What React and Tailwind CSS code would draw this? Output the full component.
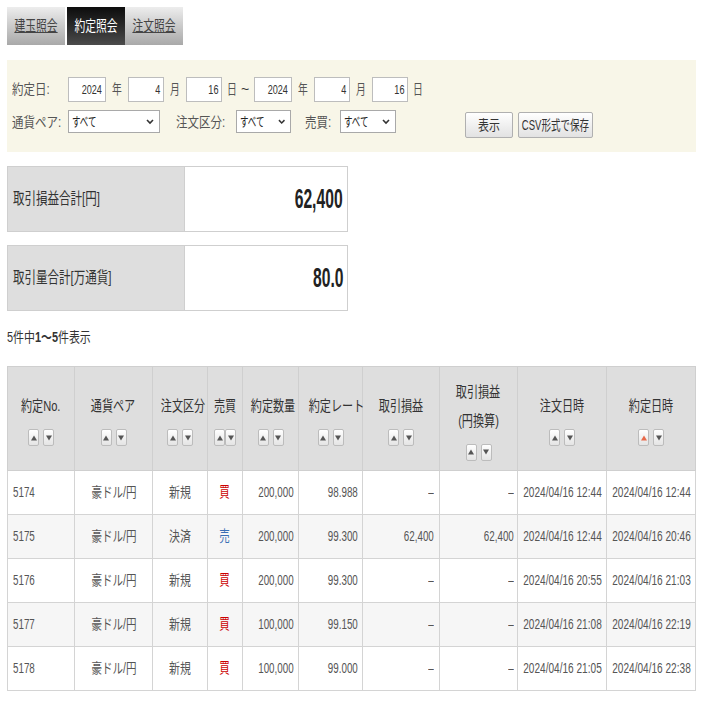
import React from "react";

const rows = [
  { no: "5174", kind: "新規", side: "買", qty: "200,000", rate: "98.988", pl: "–", plJpy: "–", ordered: "2024/04/16 12:44", executed: "2024/04/16 12:44" },
  { no: "5175", kind: "決済", side: "売", qty: "200,000", rate: "99.300", pl: "62,400", plJpy: "62,400", ordered: "2024/04/16 12:44", executed: "2024/04/16 20:46" },
  { no: "5176", kind: "新規", side: "買", qty: "200,000", rate: "99.300", pl: "–", plJpy: "–", ordered: "2024/04/16 20:55", executed: "2024/04/16 21:03" },
  { no: "5177", kind: "新規", side: "買", qty: "100,000", rate: "99.150", pl: "–", plJpy: "–", ordered: "2024/04/16 21:08", executed: "2024/04/16 22:19" },
  { no: "5178", kind: "新規", side: "買", qty: "100,000", rate: "99.000", pl: "–", plJpy: "–", ordered: "2024/04/16 21:05", executed: "2024/04/16 22:38" },
];

const columns = [
  { label: "約定No.", w: "w-[67px]" },
  { label: "通貨ペア", w: "w-[78px]" },
  { label: "注文区分", w: "w-[55px]" },
  { label: "売買", w: "w-[35px]", tight: true },
  { label: "約定数量", w: "w-[56px]" },
  { label: "約定レート", w: "w-[64px]" },
  { label: "取引損益", w: "w-[77px]" },
  { label: ["取引損益", "(円換算)"], w: "w-[78px]" },
  { label: "注文日時", w: "w-[89px]" },
  { label: "約定日時", w: "w-[89px]", active: true },
];

// the page's font is very narrow; squeeze text horizontally
function Sq({ c = "scale-x-[0.7] origin-center", children }) {
  return <span className={`inline-block whitespace-nowrap ${c}`}>{children}</span>;
}

function SortButton({ up, active }) {
  return (
    <span className="flex h-[17px] w-[11px] items-center justify-center rounded-[2px] border border-[#bcbcbc] bg-linear-to-b from-white to-[#e4e4e4]">
      <svg width="6" height="6" viewBox="0 0 6 6">
        <path d={up ? "M3 0.5L6 5.5H0z" : "M0 0.5h6L3 5.5z"} fill={active ? "#e8694a" : "#555"} />
      </svg>
    </span>
  );
}

function SortButtons({ active, tight }) {
  return (
    <div className={`mt-[9px] flex justify-center ${tight ? "gap-0" : "gap-[4px]"}`}>
      <SortButton up active={active} />
      <SortButton />
    </div>
  );
}

function DateInput({ value, w }) {
  return (
    <span className={`flex h-[25px] ${w} items-center justify-end border border-[#bdbdbd] bg-white pr-[3px] text-[13px] text-[#333]`}>
      <Sq c="scale-x-[0.7] origin-right">{value}</Sq>
    </span>
  );
}

function Select({ w }) {
  return (
    <span className={`flex h-[23px] ${w} items-center justify-between border border-[#a9a9a9] bg-white pl-[3px] pr-[5px] text-[13px] text-[#222]`}>
      <Sq c="scale-x-[0.65] origin-left">すべて</Sq>
      <svg width="8" height="6" viewBox="0 0 8 6">
        <path d="M1 1l3 3 3-3" stroke="#333" strokeWidth="1.6" fill="none" />
      </svg>
    </span>
  );
}

function Unit({ children, c = "mx-[4px]" }) {
  return (
    <span className={`${c} text-[14px] text-[#555]`}>
      <Sq c="scale-x-[0.7] origin-center">{children}</Sq>
    </span>
  );
}

function SummaryBox({ label, value }) {
  return (
    <div className="flex h-[66px] w-[341px] border border-[#cfcfcf]">
      <div className="flex w-[177px] items-center border-r border-[#cfcfcf] bg-[#dedede] pl-[5px] text-[16px] text-[#333]">
        <Sq c="scale-x-[0.72] origin-left">{label}</Sq>
      </div>
      <div className="flex flex-1 items-center justify-end bg-white pr-[4px] text-[28px] font-bold text-[#222]">
        <Sq c="scale-x-[0.56] origin-right">{value}</Sq>
      </div>
    </div>
  );
}

function Tab({ children, active }) {
  return active ? (
    <div className="ml-[2px] flex h-[38px] w-[58px] items-center justify-center bg-linear-to-b from-[#0d0d0d] to-[#4b4b4b] text-[15px] text-white">
      <Sq c="scale-x-[0.72] origin-center">{children}</Sq>
    </div>
  ) : (
    <div className="flex h-[38px] w-[58px] items-center justify-center bg-linear-to-b from-[#ededed] to-[#a9a9a9] text-[15px] text-[#444] underline">
      <Sq c="scale-x-[0.72] origin-center">{children}</Sq>
    </div>
  );
}

export default function App() {
  return (
    <div className="min-h-[704px] bg-white pl-[7px] pt-[7px] font-['Liberation_Sans','Noto_Sans_CJK_JP',sans-serif] text-[#444]">
      {/* tabs */}
      <div className="flex">
        <Tab>建玉照会</Tab>
        <Tab active>約定照会</Tab>
        <Tab>注文照会</Tab>
      </div>

      {/* filter panel */}
      <div className="mt-[15px] h-[92px] w-[689px] bg-[#f8f6e8] pl-[5px] pt-[17px] text-[14px] text-[#555]">
        <div className="flex items-center">
          <span className="w-[56px]">
            <Sq c="scale-x-[0.82] origin-left">約定日:</Sq>
          </span>
          <DateInput value="2024" w="w-[38px]" />
          <Unit>年</Unit>
          <DateInput value="4" w="w-[36px]" />
          <Unit>月</Unit>
          <DateInput value="16" w="w-[36px]" />
          <Unit c="ml-[3px]">日</Unit>
          <span className="ml-[2px] mr-[5px] text-[14px] text-[#333]">~</span>
          <DateInput value="2024" w="w-[38px]" />
          <Unit>年</Unit>
          <DateInput value="4" w="w-[36px]" />
          <Unit>月</Unit>
          <DateInput value="16" w="w-[36px]" />
          <Unit c="ml-[3px]">日</Unit>
        </div>
        <div className="mt-[8px] flex items-start">
          <span className="mt-[2px] w-[56px]">
            <Sq c="scale-x-[0.82] origin-left">通貨ペア:</Sq>
          </span>
          <Select w="w-[92px]" />
          <span className="ml-[16px] mt-[2px] w-[60px]">
            <Sq c="scale-x-[0.82] origin-left">注文区分:</Sq>
          </span>
          <Select w="w-[55px]" />
          <span className="ml-[14px] mt-[2px] w-[35px]">
            <Sq c="scale-x-[0.82] origin-left">売買:</Sq>
          </span>
          <Select w="w-[56px]" />
          <div className="ml-[69px] mt-[2px] flex gap-[5px]">
            <span className="flex h-[26px] w-[48px] items-center justify-center rounded-[2px] border border-[#b0b0b0] bg-linear-to-b from-white to-[#e2e2e2] text-[14px] text-[#333]">
              <Sq c="scale-x-[0.78] origin-center">表示</Sq>
            </span>
            <span className="flex h-[26px] w-[75px] items-center justify-center rounded-[2px] border border-[#b0b0b0] bg-linear-to-b from-white to-[#e2e2e2] text-[14px] text-[#333]">
              <Sq c="scale-x-[0.68] origin-center">CSV形式で保存</Sq>
            </span>
          </div>
        </div>
      </div>

      {/* summary */}
      <div className="mt-[14px]">
        <SummaryBox label="取引損益合計[円]" value="62,400" />
      </div>
      <div className="mt-[13px]">
        <SummaryBox label="取引量合計[万通貨]" value="80.0" />
      </div>

      <div className="mt-[18px] text-[14px] leading-[16px] text-[#333]">
        <Sq c="scale-x-[0.78] origin-left">
          5件中<span className="font-bold">1～5</span>件表示
        </Sq>
      </div>

      {/* table */}
      <table className="mt-[21px] w-[689px] table-fixed border-collapse text-[14px]">
        <thead>
          <tr className="h-[104px] bg-[#dedede]">
            {columns.map((c, i) => (
              <th key={i} className={`${c.w} border border-[#cfcfcf] px-0 align-middle text-[15px] font-normal text-[#333]`}>
                {Array.isArray(c.label) ? (
                  <div className="leading-[29px]">
                    <Sq c="scale-x-[0.74] origin-center">{c.label[0]}</Sq>
                    <br />
                    <Sq c="scale-x-[0.74] origin-center">{c.label[1]}</Sq>
                  </div>
                ) : (
                  <div className="leading-[29px]">
                    <Sq c="scale-x-[0.74] origin-center">{c.label}</Sq>
                  </div>
                )}
                <SortButtons active={c.active} tight={c.tight} />
              </th>
            ))}
          </tr>
        </thead>
        <tbody>
          {rows.map((r, i) => (
            <tr key={r.no} className={`h-[44px] ${i % 2 === 1 ? "bg-[#f6f6f6]" : "bg-white"} text-[#555]`}>
              <td className="border border-[#d4d4d4] pl-[5px] text-left">
                <Sq c="scale-x-[0.7] origin-left">{r.no}</Sq>
              </td>
              <td className="border border-[#d4d4d4] text-center">
                <Sq c="scale-x-[0.75] origin-center">豪ドル/円</Sq>
              </td>
              <td className="border border-[#d4d4d4] text-center">
                <Sq c="scale-x-[0.78] origin-center">{r.kind}</Sq>
              </td>
              <td className={`border border-[#d4d4d4] text-center text-[15px] ${r.side === "買" ? "text-[#cc0000]" : "text-[#3a6fb5]"}`}>
                <Sq c="scale-x-[0.7] origin-center">{r.side}</Sq>
              </td>
              <td className="border border-[#d4d4d4] pr-[4px] text-right">
                <Sq c="scale-x-[0.7] origin-right">{r.qty}</Sq>
              </td>
              <td className="border border-[#d4d4d4] pr-[4px] text-right">
                <Sq c="scale-x-[0.7] origin-right">{r.rate}</Sq>
              </td>
              <td className="border border-[#d4d4d4] pr-[5px] text-right">
                <Sq c="scale-x-[0.7] origin-right">{r.pl}</Sq>
              </td>
              <td className="border border-[#d4d4d4] pr-[3px] text-right">
                <Sq c="scale-x-[0.7] origin-right">{r.plJpy}</Sq>
              </td>
              <td className="border border-[#d4d4d4]">
                <div className="flex justify-center">
                  <Sq c="scale-x-[0.72] origin-center">{r.ordered}</Sq>
                </div>
              </td>
              <td className="border border-[#d4d4d4]">
                <div className="flex justify-center">
                  <Sq c="scale-x-[0.72] origin-center">{r.executed}</Sq>
                </div>
              </td>
            </tr>
          ))}
        </tbody>
      </table>
    </div>
  );
}
